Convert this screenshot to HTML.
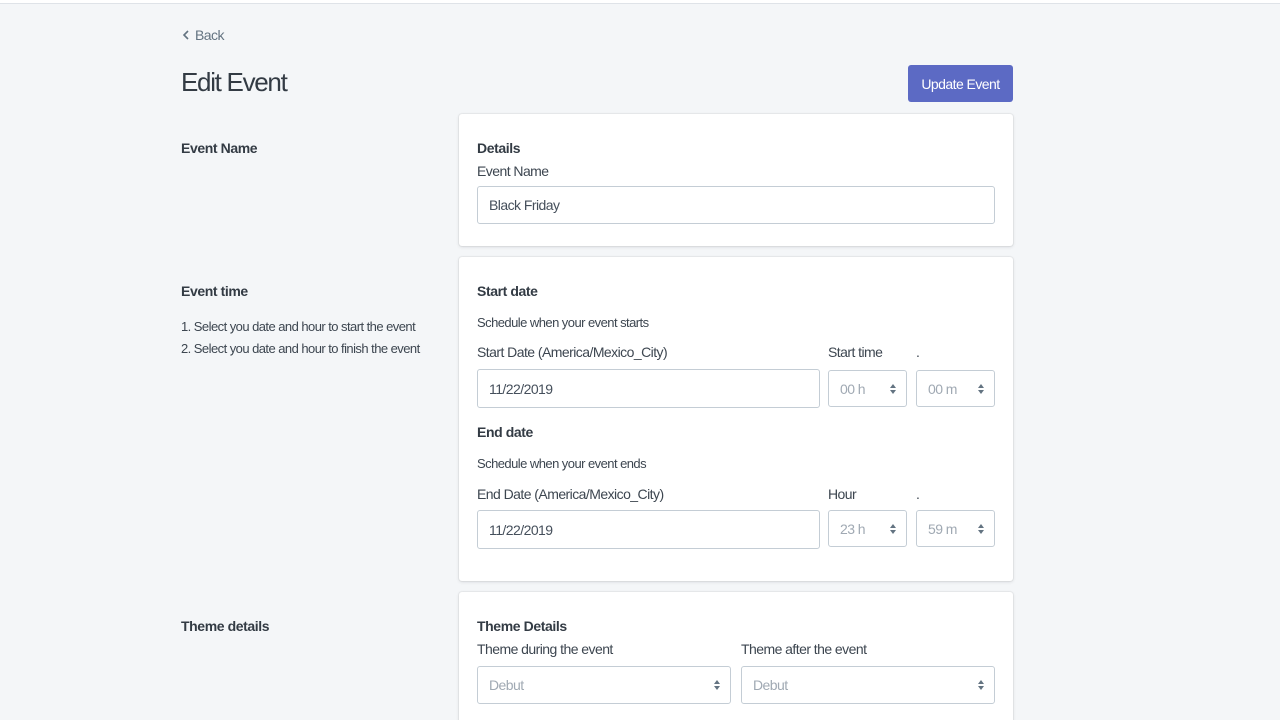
<!DOCTYPE html>
<html><head><style>
*{box-sizing:border-box;margin:0;padding:0}
html,body{width:1280px;height:720px;overflow:hidden}
body{background:#f4f6f8;font-family:"Liberation Sans",sans-serif;color:#333b44;position:relative;letter-spacing:-0.55px}
.a{position:absolute;white-space:nowrap}
.top{position:absolute;left:0;top:0;width:1280px;height:4px;background:#fff;border-bottom:1px solid #dfe3e8}
.card{position:absolute;left:459px;width:554px;background:#fff;border-radius:3px;box-shadow:0 0 0 1px rgba(63,63,68,.05),0 1px 3px rgba(63,63,68,.15)}
.b{font-weight:bold;font-size:14px;color:#333b44;letter-spacing:-0.4px}
.t{font-size:14px;color:#3d4650}
.s{font-size:13px;color:#3d4650}
.in{position:absolute;background:#fff;border:1px solid #c4cdd5;border-radius:3px;font-size:14px;color:#454f5b;padding-left:11px;display:flex;align-items:center}
.sel{color:#a0a9b3}
.sel::after{content:"";position:absolute;right:10px;top:50%;margin-top:-5px;width:0;height:0;border-left:3px solid transparent;border-right:3px solid transparent;border-bottom:4px solid #637381}
.sel::before{content:"";position:absolute;right:10px;top:50%;margin-top:1px;width:0;height:0;border-left:3px solid transparent;border-right:3px solid transparent;border-top:4px solid #637381}
</style></head><body>
<div class="top"></div>
<div class="a" style="left:181px;top:27px;font-size:14px;color:#637381"><svg width="10" height="12" viewBox="0 0 10 12" style="vertical-align:-1px;margin-right:4px"><path d="M7 2 L3 6 L7 10" fill="none" stroke="#637381" stroke-width="1.6"/></svg>Back</div>
<div class="a" style="left:181px;top:67px;font-size:26px;color:#333b44;letter-spacing:-1.3px">Edit Event</div>
<div class="a" style="left:908px;top:65px;width:105px;height:37px;background:#5c6ac4;border-radius:3px;color:#fff;font-size:14px;display:flex;align-items:center;justify-content:center">Update Event</div>

<div class="a b" style="left:181px;top:140px">Event Name</div>
<div class="card" style="top:114px;height:132px"></div>
<div class="a b" style="left:477px;top:140px">Details</div>
<div class="a t" style="left:477px;top:163px">Event Name</div>
<div class="in" style="left:477px;top:186px;width:518px;height:38px">Black Friday</div>

<div class="a b" style="left:181px;top:283px">Event time</div>
<div class="a s" style="left:181px;top:319px">1. Select you date and hour to start the event</div>
<div class="a s" style="left:181px;top:341px">2. Select you date and hour to finish the event</div>
<div class="card" style="top:257px;height:324px"></div>
<div class="a b" style="left:477px;top:283px">Start date</div>
<div class="a s" style="left:477px;top:315px">Schedule when your event starts</div>
<div class="a t" style="left:477px;top:344px">Start Date (America/Mexico_City)</div>
<div class="a t" style="left:828px;top:344px">Start time</div>
<div class="a t" style="left:916px;top:344px">.</div>
<div class="in" style="left:477px;top:369px;width:343px;height:39px">11/22/2019</div>
<div class="in sel" style="left:828px;top:370px;width:79px;height:37px">00 h</div>
<div class="in sel" style="left:916px;top:370px;width:79px;height:37px">00 m</div>
<div class="a b" style="left:477px;top:424px">End date</div>
<div class="a s" style="left:477px;top:456px">Schedule when your event ends</div>
<div class="a t" style="left:477px;top:486px">End Date (America/Mexico_City)</div>
<div class="a t" style="left:828px;top:486px">Hour</div>
<div class="a t" style="left:916px;top:486px">.</div>
<div class="in" style="left:477px;top:510px;width:343px;height:39px">11/22/2019</div>
<div class="in sel" style="left:828px;top:510px;width:79px;height:37px">23 h</div>
<div class="in sel" style="left:916px;top:510px;width:79px;height:37px">59 m</div>

<div class="a b" style="left:181px;top:618px">Theme details</div>
<div class="card" style="top:592px;height:160px"></div>
<div class="a b" style="left:477px;top:618px">Theme Details</div>
<div class="a t" style="left:477px;top:641px">Theme during the event</div>
<div class="a t" style="left:741px;top:641px">Theme after the event</div>
<div class="in sel" style="left:477px;top:666px;width:254px;height:38px">Debut</div>
<div class="in sel" style="left:741px;top:666px;width:254px;height:38px">Debut</div>
</body></html>
